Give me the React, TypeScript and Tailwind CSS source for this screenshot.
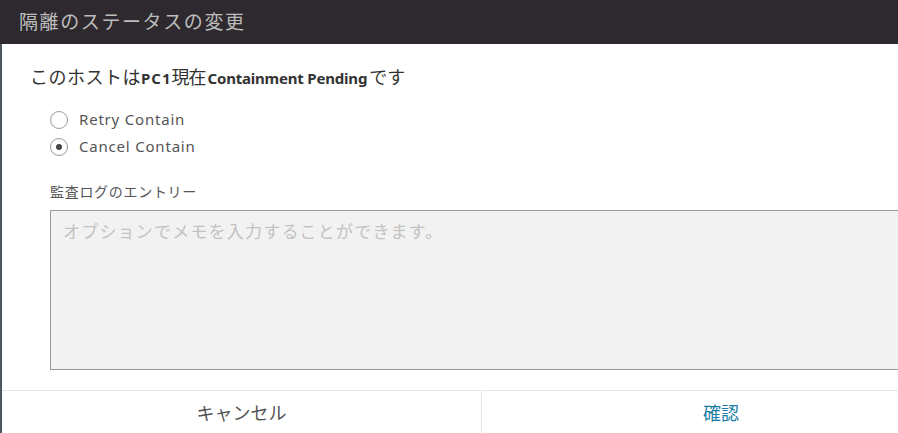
import React from "react";

const jp = '"Noto Sans CJK JP", "Noto Sans", sans-serif';
const en = '"Noto Sans", "Noto Sans CJK JP", sans-serif';

function Radio({ checked, label }: { checked?: boolean; label: string }) {
  return (
    <div className="flex items-center h-[27px]">
      <span className="w-[18px] h-[18px] rounded-full border border-[#9a9a9a] bg-white flex items-center justify-center">
        {checked && <span className="w-[6px] h-[6px] rounded-full bg-[#444]" />}
      </span>
      <span className="ml-[11px] text-[15px] text-[#555] tracking-[0.8px]" style={{ fontFamily: en }}>
        {label}
      </span>
    </div>
  );
}

export default function App() {
  return (
    <div className="w-[898px] h-[433px] overflow-hidden bg-white relative" style={{ fontFamily: jp }}>
      <div className="w-[960px] h-[44px] bg-[#2e292e] flex items-center pl-[19px]">
        <span className="text-[19px] text-[#bdbdbd] tracking-[1.6px] -mt-[1px]">隔離のステータスの変更</span>
      </div>
      <div className="flex h-[389px]">
        <div className="w-[2px] bg-[#4f565d] shrink-0" />
        <div className="w-[958px] shrink-0 flex flex-col bg-white">
          <div className="pl-[28px] pt-[19px] h-[346px]">
            <div className="text-[18px] text-[#333] leading-[26px] flex items-baseline">
              <span className="tracking-[0.5px]">このホストは</span>
              <span className="font-bold text-[15px] tracking-[1px]" style={{ fontFamily: en }}>PC1</span>
              <span className="tracking-[-1px]">現在</span>
              <span className="font-bold text-[15px] tracking-[-0.2px] ml-[2px]" style={{ fontFamily: en }}>Containment Pending</span>
              <span className="ml-[2px]">です</span>
            </div>
            <div className="pl-[20px] mt-[15px] flex flex-col">
              <Radio label="Retry Contain" />
              <Radio checked label="Cancel Contain" />
            </div>
            <div className="pl-[20px] mt-[21px]">
              <div className="text-[14px] text-[#555] leading-[20px] tracking-[0.7px]">監査ログのエントリー</div>
              <div className="mt-[9px] h-[160px] w-[930px] bg-[#f2f2f2] border border-[#999] px-[12px] pt-[7px]">
                <span className="text-[17px] text-[#c2c2c2] tracking-[1.2px]">オプションでメモを入力することができます。</span>
              </div>
            </div>
          </div>
          <div className="flex border-t border-[#e6e6e6] h-[43px]">
            <div className="w-[480px] flex items-center justify-center text-[18px] text-[#555] border-r border-[#e6e6e6]">
              キャンセル
            </div>
            <div className="flex-1 flex items-center justify-center text-[18px] text-[#1c7fa6]">確認</div>
          </div>
        </div>
      </div>
    </div>
  );
}
